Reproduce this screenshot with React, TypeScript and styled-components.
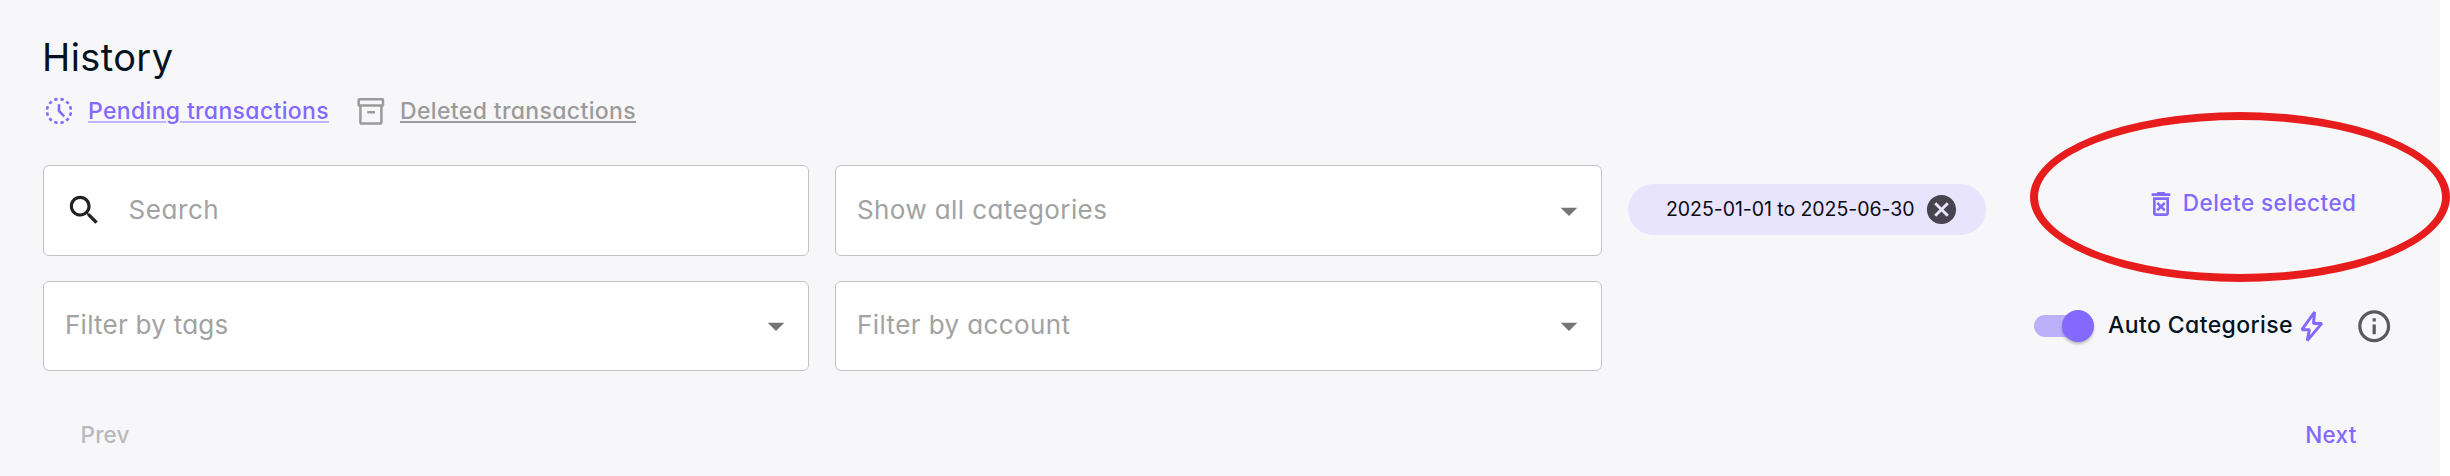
import React from "react";
import styled, { createGlobalStyle } from "styled-components";

const violet = "#8469ff";
const muted = "#9b9b9b";
const ink = "#03131f";

const GlobalStyle = createGlobalStyle`
  *, *::before, *::after { box-sizing: border-box; }
  body {
    margin: 0;
    background: #fff;
    font-family: Inter, "Open Sans", sans-serif;
    font-feature-settings: "cv11";
    line-height: 1;
  }
  svg { display: block; flex: none; }
`;

const Page = styled.main`
  position: relative;
  width: 2440px;
  height: 476px;
  padding: 37px 45px 0 43px;
  background: #f7f7fa;
`;

const Title = styled.h1`
  margin: 0;
  color: ${ink};
  font-size: 38px;
  font-weight: 400;
  line-height: 41px;
  letter-spacing: 0.4px;
  text-indent: -1px;
`;

const Links = styled.nav`
  display: flex;
  gap: 26px;
  height: 32px;
  margin-top: 17px;
`;

const LinkItem = styled.div<{ $color: string }>`
  display: flex;
  align-items: center;
  gap: 13px;
  color: ${(p) => p.$color};
`;

const LinkText = styled.a<{ $line: string; $spacing: number }>`
  padding-top: 1px;
  font-size: 23px;
  font-weight: 500;
  letter-spacing: ${(p) => p.$spacing}px;
  text-decoration: underline;
  text-decoration-color: ${(p) => p.$line};
  text-decoration-thickness: 2px;
  text-underline-offset: 2px;
`;

const Filters = styled.section`
  display: grid;
  grid-template-columns: 766px 767px 358px 1fr;
  grid-template-rows: 91px 90px;
  column-gap: 26px;
  row-gap: 25px;
  align-items: center;
  margin-top: 38px;
`;

const Field = styled.div<{ $spacing?: number }>`
  display: flex;
  align-items: center;
  justify-content: space-between;
  height: 100%;
  padding: 0 12.5px 0 21px;
  border: 1px solid #c3c3c5;
  border-radius: 6px;
  background: #fff;
  color: #757575;
  letter-spacing: ${(p) => p.$spacing ?? 0.4}px;
`;

const SearchField = styled(Field)`
  justify-content: flex-start;
  gap: 25px;
  color: #212121;
`;

const Placeholder = styled.span`
  padding-bottom: 2px;
  color: #a2a2a2;
  font-size: 26px;
`;

const DateChip = styled.div`
  display: flex;
  align-items: center;
  height: 51px;
  margin: -2px 0 0 -0.5px;
  padding: 0 27px 0 38.5px;
  justify-content: space-between;
  border-radius: 26px;
  background: #e8e4fe;
  color: #47444f;
`;

const DateText = styled.span`
  color: #0a0a12;
  font-size: 19.5px;
  letter-spacing: -0.05px;
`;

const DeleteButton = styled.button`
  display: flex;
  align-items: center;
  justify-content: flex-end;
  gap: 5.5px;
  margin: 0;
  padding: 0 38.5px 13px 0;
  border: 0;
  background: none;
  color: ${violet};
  font: inherit;
  font-feature-settings: inherit;
`;

const ActionText = styled.span`
  padding-bottom: 2px;
  font-size: 22.5px;
  font-weight: 500;
  letter-spacing: 0.46px;
`;

const AutoRow = styled.div`
  grid-column: 4;
  display: flex;
  align-items: center;
`;

const Track = styled.div`
  display: flex;
  align-items: center;
  justify-content: flex-end;
  width: 60px;
  height: 22px;
  margin-left: 22px;
  margin-right: 14px;
  border-radius: 11px;
  background: linear-gradient(90deg, #bcb0fb 48px, transparent 48px);
`;

const Thumb = styled.div`
  width: 32px;
  height: 32px;
  flex: none;
  border-radius: 50%;
  background: ${violet};
  box-shadow: 0 2px 3px rgba(0, 0, 0, 0.26);
`;

const AutoLabel = styled.span`
  width: 191px;
  color: ${ink};
  font-size: 23px;
  font-weight: 500;
  letter-spacing: 0.4px;
  white-space: nowrap;
`;

const InfoButton = styled.span`
  margin-left: 29px;
  color: #59595e;
`;

const Pager = styled.footer`
  display: flex;
  justify-content: space-between;
  margin-top: 52px;
  padding: 0 38.5px 0 37.5px;
`;

const PagerItem = styled.span<{ $disabled?: boolean }>`
  color: ${(p) => (p.$disabled ? "#b9b9bb" : violet)};
  font-size: 22.5px;
  font-weight: 500;
  line-height: 24px;
  letter-spacing: 0.2px;
`;

const Highlight = styled.div`
  position: absolute;
  left: 2030px;
  top: 112px;
  width: 420px;
  height: 170px;
  border: 8px solid #e71c1c;
  border-radius: 50%;
  pointer-events: none;
`;

const Glyph = ({ size, d }: { size: number; d: string }) => (
  <svg width={size} height={size} viewBox="0 0 24 24" fill="currentColor">
    <path d={d} />
  </svg>
);

const icons = {
  search:
    "M15.5 14h-.79l-.28-.27C15.41 12.59 16 11.11 16 9.5 16 5.91 13.09 3 9.5 3S3 5.91 3 9.5 5.91 16 9.5 16c1.61 0 3.09-.59 4.23-1.57l.27.28v.79l5 4.99L20.49 19l-4.99-5zm-6 0C7.01 14 5 11.99 5 9.5S7.01 5 9.5 5 14 7.01 14 9.5 11.99 14 9.5 14z",
  arrow: "M7 10l5 5 5-5z",
  cancel:
    "M12 2C6.47 2 2 6.47 2 12s4.47 10 10 10 10-4.47 10-10S17.53 2 12 2zm5 13.59L15.59 17 12 13.41 8.41 17 7 15.59 10.59 12 7 8.41 8.41 7 12 10.59 15.59 7 17 8.41 13.41 12 17 15.59z",
  trash:
    "M14.12 10.47 12 12.59l-2.13-2.12-1.41 1.41L10.59 14l-2.12 2.12 1.41 1.41L12 15.41l2.12 2.12 1.41-1.41L13.41 14l2.12-2.12zM15.5 4l-1-1h-5l-1 1H5v2h14V4zM6 19c0 1.1.9 2 2 2h8c1.1 0 2-.9 2-2V7H6v12zM8 9h8v10H8V9z",
  info: "M11 7h2v2h-2zm0 4h2v6h-2zm1-9C6.48 2 2 6.48 2 12s4.48 10 10 10 10-4.48 10-10S17.52 2 12 2zm0 18c-4.41 0-8-3.59-8-8s3.59-8 8-8 8 3.59 8 8-3.59 8-8 8z",
};

const PendingIcon = () => (
  <svg width="32" height="32" viewBox="0 0 32 32" fill="none" stroke="currentColor" strokeWidth="2.6">
    <circle cx="16" cy="16" r="12" pathLength="120" strokeDasharray="5.2 4.8" strokeDashoffset="-2.4" />
    <path d="M16 9.2V16L21.2 21.4" />
  </svg>
);

const ArchiveIcon = () => (
  <svg width="32" height="32" viewBox="0 0 32 32" fill="none" stroke="currentColor" strokeWidth="2.5">
    <rect x="3.7" y="4.3" width="24.3" height="6.2" rx="0.6" />
    <path d="M5.4 10.5V27.2Q5.4 28.5 6.7 28.5H25.1Q26.4 28.5 26.4 27.2V10.5M12.2 17.3H20" />
  </svg>
);

const BoltIcon = () => (
  <svg width="27" height="34" viewBox="0 0 27 34" fill="none" stroke={violet} strokeWidth="3">
    <path d="M15.6 3L2.9 20.7H10.4L8.2 31.6L22.8 14.4H14.5Z" strokeLinejoin="bevel" />
  </svg>
);

export default function App() {
  return (
    <>
      <GlobalStyle />
      <Page>
        <Title>History</Title>
        <Links>
          <LinkItem $color={violet}>
            <PendingIcon />
            <LinkText $line="#c0b3ff" $spacing={0.34}>Pending transactions</LinkText>
          </LinkItem>
          <LinkItem $color={muted}>
            <ArchiveIcon />
            <LinkText $line={muted} $spacing={0.36}>Deleted transactions</LinkText>
          </LinkItem>
        </Links>
        <Filters>
          <SearchField $spacing={0.6}>
            <Glyph size={38.4} d={icons.search} />
            <Placeholder>Search</Placeholder>
          </SearchField>
          <Field>
            <Placeholder>Show all categories</Placeholder>
            <Glyph size={40} d={icons.arrow} />
          </Field>
          <DateChip>
            <DateText>2025-01-01 to 2025-06-30</DateText>
            <Glyph size={35} d={icons.cancel} />
          </DateChip>
          <DeleteButton>
            <Glyph size={32} d={icons.trash} />
            <ActionText>Delete selected</ActionText>
          </DeleteButton>
          <Field $spacing={0.25}>
            <Placeholder>Filter by tags</Placeholder>
            <Glyph size={40} d={icons.arrow} />
          </Field>
          <Field>
            <Placeholder>Filter by account</Placeholder>
            <Glyph size={40} d={icons.arrow} />
          </Field>
          <AutoRow>
            <Track>
              <Thumb />
            </Track>
            <AutoLabel>Auto Categorise</AutoLabel>
            <BoltIcon />
            <InfoButton>
              <Glyph size={38.4} d={icons.info} />
            </InfoButton>
          </AutoRow>
        </Filters>
        <Pager>
          <PagerItem $disabled>Prev</PagerItem>
          <PagerItem>Next</PagerItem>
        </Pager>
        <Highlight />
      </Page>
    </>
  );
}
